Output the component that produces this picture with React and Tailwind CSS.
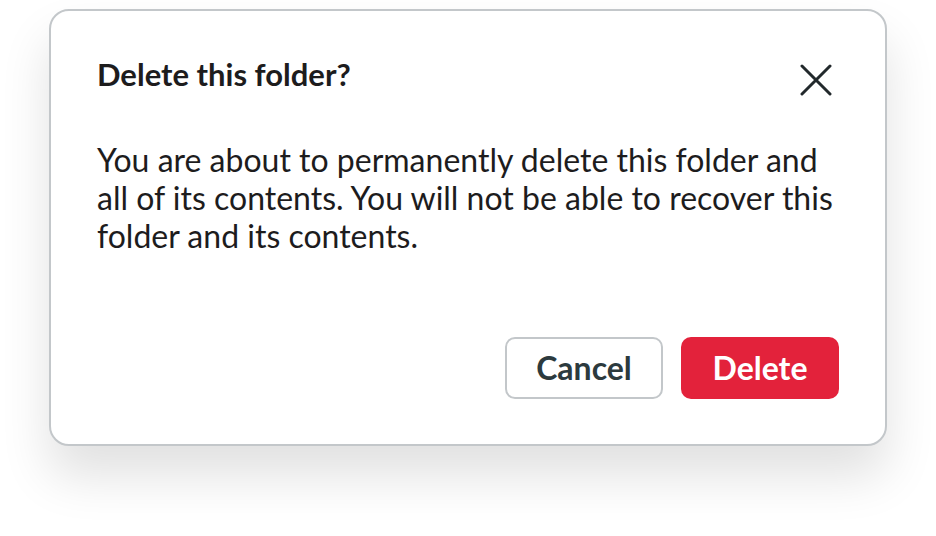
import React from "react";

export default function App() {
  return (
    <div className="w-[936px] h-[536px] bg-white pt-[9px] pl-[49px] font-['Lato','Noto_Sans',sans-serif]">
      <div className="w-[838px] h-[437px] rounded-[20px] border-2 border-[#c3c7ca] bg-white shadow-[0_30px_50px_rgba(0,0,0,0.12)] flex flex-col px-[46px] pt-[45px] pb-[45px]">
        <div className="flex items-start justify-between">
          <h2 className="text-[31px] leading-[36px] font-bold text-[#1d1c1d]">
            Delete this folder?
          </h2>
          <button className="mt-[8px] mr-[7px] w-[32px] h-[32px] flex items-center justify-center text-[#22292c]">
            <svg width="32" height="32" viewBox="0 0 32 32" fill="none">
              <path
                d="M2 2 L30 30 M30 2 L2 30"
                stroke="currentColor"
                strokeWidth="3"
                strokeLinecap="round"
              />
            </svg>
          </button>
        </div>
        <p className="mt-[45px] text-[32px] leading-[38px] text-[#1d1c1d]">
          You are about to permanently delete this folder and all of its
          contents. You will not be able to recover this folder and its
          contents.
        </p>
        <div className="mt-auto flex justify-end gap-[18px]">
          <button className="w-[158px] h-[62px] rounded-[10px] border-2 border-[#c3c7ca] bg-white text-[32px] font-bold text-[#2c3a3e]">
            Cancel
          </button>
          <button className="w-[158px] h-[62px] rounded-[10px] bg-[#e3223b] text-[32px] font-bold text-white">
            Delete
          </button>
        </div>
      </div>
    </div>
  );
}
